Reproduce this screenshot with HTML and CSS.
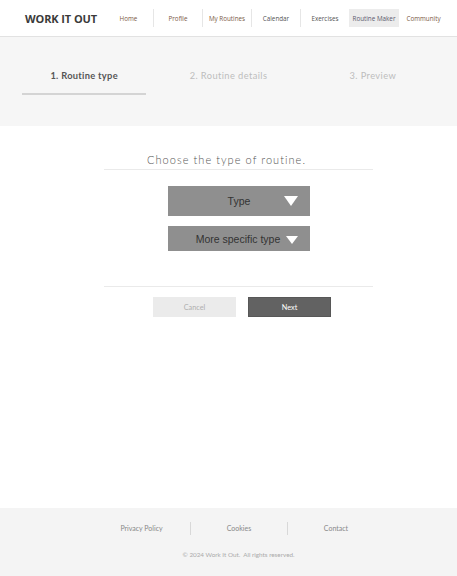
FILE: index.html
```html
<!DOCTYPE html>
<html>
<head>
<meta charset="utf-8">
<link rel="stylesheet" href="styles.css">
</head>
<body>
<div class="page">
  <header class="header">
    <div class="brand">WORK IT OUT</div>
    <nav class="nav">
      <a class="nav-item warm">Home</a>
      <a class="nav-item warm sep">Profile</a>
      <a class="nav-item warm sep">My Routines</a>
      <a class="nav-item sep">Calendar</a>
      <a class="nav-item sep">Exercises</a>
      <a class="nav-item active">Routine Maker</a>
      <a class="nav-item warm">Community</a>
    </nav>
  </header>

  <section class="steps">
    <div class="step current">1. Routine type</div>
    <div class="step">2. Routine details</div>
    <div class="step">3. Preview</div>
  </section>

  <main class="main">
    <div class="panel">
      <h2 class="title">Choose the type of routine.</h2>
      <div class="selects">
        <div class="select big"><span>Type</span><i class="caret"></i></div>
        <div class="select small"><span>More specific type</span><i class="caret"></i></div>
      </div>
      <div class="actions">
        <button class="btn cancel">Cancel</button>
        <button class="btn next">Next</button>
      </div>
    </div>
  </main>

  <footer class="footer">
    <div class="links">
      <a class="flink">Privacy Policy</a>
      <a class="flink sep">Cookies</a>
      <a class="flink sep">Contact</a>
    </div>
    <div class="copy">© 2024 Work It Out.&nbsp; All rights reserved.</div>
  </footer>
</div>
</body>
</html>
```
FILE: styles.css
```css
* { box-sizing: border-box; }
html, body { margin: 0; padding: 0; background: #fff; }
body { font-family: "Open Sans", "Liberation Sans", sans-serif; }
.page { display: flex; flex-direction: column; min-height: 576px; }

.header {
  height: 37px;
  display: flex;
  align-items: center;
  border-bottom: 1px solid #e2e2e2;
  padding-left: 25px;
}
.brand {
  font-family: "Open Sans", sans-serif;
  font-weight: 700;
  font-size: 11px;
  color: #3a3a3a;
  letter-spacing: -0.1px;
  width: 79px;
}
.nav { display: flex; align-items: center; height: 100%; }
.nav-item {
  width: 49px;
  height: 18px;
  display: flex;
  align-items: center;
  justify-content: center;
  font-family: "Open Sans", sans-serif;
  font-size: 6.3px;
  color: #555;
  white-space: nowrap;
}
.nav-item.warm { color: #7b5a46; }
.nav-item.sep { border-left: 1px solid #e6e6e6; }
.nav-item.active { background: #ececec; color: #5c5a6e; width: 50px; }

.steps {
  background: #f6f6f6;
  height: 89px;
  display: flex;
  padding: 31px 12px 0;
}
.step {
  flex: 1;
  margin: 0 10px;
  height: 27px;
  text-align: center;
  font-family: Lato, sans-serif;
  font-weight: 400;
  font-size: 9.3px;
  color: #bdbdbd;
  letter-spacing: 0.4px;
  line-height: 16px;
}
.step.current { color: #555; font-weight: 700; letter-spacing: 0.3px; border-bottom: 2px solid #d4d4d4; }

.main { flex: 1; display: flex; justify-content: center; }
.panel { width: 269px; margin-left: 19px; padding-top: 27px; }
.title {
  margin: 0;
  text-align: center;
  font-family: Lato, sans-serif;
  font-weight: 300;
  font-size: 11px;
  letter-spacing: 1.05px;
  color: #555;
  padding: 0 23px 3px 0;
  border-bottom: 1px solid #eaeaea;
}
.selects {
  display: flex;
  flex-direction: column;
  align-items: center;
  gap: 10px;
  padding: 16px 0 35px;
  border-bottom: 1px solid #eaeaea;
}
.select {
  width: 142px;
  margin-left: 2px;
  background: #8f8f8f;
  display: flex;
  align-items: center;
  justify-content: center;
  position: relative;
  font-family: "Liberation Sans", Arial, sans-serif;
  font-size: 10.5px;
  color: #333;
}
.select.big { height: 30px; }
.select.small { height: 25px; }
.select.small span { margin-right: 2px; }
.caret {
  position: absolute;
  right: 12px;
  top: 50%;
  margin-top: -5px;
  width: 0; height: 0;
  border-left: 7px solid transparent;
  border-right: 7px solid transparent;
  border-top: 10px solid #fff;
}
.select.small .caret { right: 12px; margin-top: -3px; border-left-width: 6.5px; border-right-width: 6.5px; border-top-width: 8px; }

.actions {
  display: flex;
  justify-content: center;
  gap: 12px;
  padding-top: 10px;
  margin-left: 8px;
}
.btn {
  width: 83px;
  height: 20px;
  border: 0;
  font-family: Lato, sans-serif;
  font-size: 7.3px;
  padding: 0;
}
.btn.cancel { background: #ebebeb; color: #b0b0b0; }
.btn.next { background: #626262; color: #fff; border: 1px solid #575757; }

.footer {
  background: #f4f4f4;
  height: 68px;
  padding-top: 14px;
}
.links { display: flex; justify-content: center; padding-left: 20px; }
.flink {
  width: 97px;
  text-align: center;
  font-family: Lato, sans-serif;
  font-size: 7px;
  color: #888;
  line-height: 13px;
}
.flink.sep { border-left: 1px solid #d8d8d8; }
.copy {
  margin-top: 16px;
  text-align: center;
  padding-left: 20px;
  font-family: Lato, sans-serif;
  font-size: 6.3px;
  color: #aaa;
}
```
